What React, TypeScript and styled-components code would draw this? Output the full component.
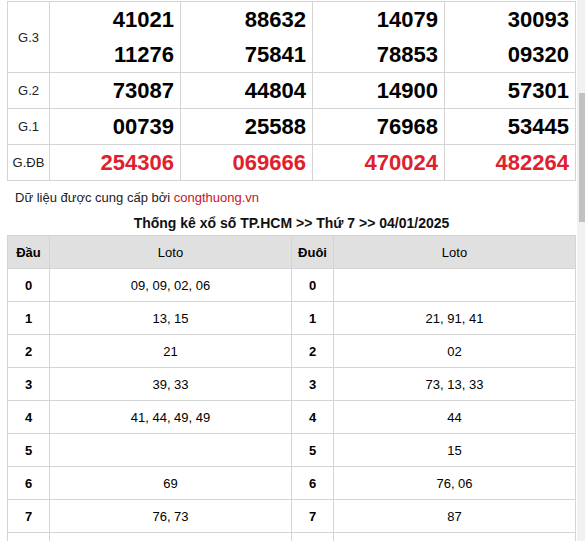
import React from "react";
import styled, { createGlobalStyle } from "styled-components";

const GlobalStyle = createGlobalStyle`
  html, body {
    margin: 0;
    padding: 0;
    background: #ffffff;
    overflow: hidden;
  }
  body {
    font-family: "Liberation Sans", Arial, sans-serif;
    color: #111;
  }
`;

const Page = styled.div`
  padding: 1px 9px 0 7px;
  width: 585px;
  box-sizing: border-box;
`;

const ResultGrid = styled.div`
  display: grid;
  grid-template-columns: 42px 131px 132px 132px 1fr;
  border-left: 1px solid #d4d4d4;
  border-top: 1px solid #d4d4d4;
`;

const Cell = styled.div`
  border-right: 1px solid #d4d4d4;
  border-bottom: 1px solid #d4d4d4;
  box-sizing: border-box;
`;

const LabelCell = styled(Cell)`
  display: flex;
  align-items: center;
  justify-content: center;
  font-size: 13px;
  color: #222;
`;

const NumberCell = styled(Cell)`
  display: flex;
  flex-direction: column;
  align-items: flex-end;
  justify-content: center;
  padding-right: 6px;
`;

const Num = styled.div<{ $special?: boolean }>`
  height: 35px;
  line-height: 35px;
  font-size: 22px;
  font-weight: 700;
  color: ${(p) => (p.$special ? "#e0202c" : "#000")};
`;

const Caption = styled.div`
  padding: 9px 8px 0;
  font-size: 13px;
  line-height: 16px;
  color: #222;
`;

const Link = styled.span`
  color: #d0112b;
`;

const Title = styled.div`
  margin-top: 8px;
  text-align: center;
  font-size: 14px;
  font-weight: 700;
  line-height: 18px;
  color: #111;
`;

const LotoGrid = styled.div`
  margin-top: 3px;
  display: grid;
  grid-template-columns: 42px 242px 42px 1fr;
  border-left: 1px solid #d4d4d4;
  border-top: 1px solid #d4d4d4;
`;

const LotoCell = styled.div<{ $head?: boolean; $bold?: boolean }>`
  height: 33px;
  box-sizing: border-box;
  border-right: 1px solid #d4d4d4;
  border-bottom: 1px solid #d4d4d4;
  display: flex;
  align-items: center;
  justify-content: center;
  font-size: 13px;
  font-weight: ${(p) => (p.$bold ? 700 : 400)};
  background: ${(p) => (p.$head ? "#e0e0e0" : "#fff")};
  color: #000;
`;

const Scrollbar = styled.div`
  position: fixed;
  top: 0;
  right: 0;
  width: 8px;
  height: 100%;
  background: #f1f1f1;
`;

const Thumb = styled.div`
  position: absolute;
  top: 93px;
  right: 0;
  width: 6px;
  height: 129px;
  background: #c1c1c1;
`;

type Prize = { label: string; nums: string[][]; special?: boolean };

const prizes: Prize[] = [
  {
    label: "G.3",
    nums: [
      ["41021", "11276"],
      ["88632", "75841"],
      ["14079", "78853"],
      ["30093", "09320"],
    ],
  },
  { label: "G.2", nums: [["73087"], ["44804"], ["14900"], ["57301"]] },
  { label: "G.1", nums: [["00739"], ["25588"], ["76968"], ["53445"]] },
  {
    label: "G.ĐB",
    nums: [["254306"], ["069666"], ["470024"], ["482264"]],
    special: true,
  },
];

const loto: [string, string, string][] = [
  ["0", "09, 09, 02, 06", ""],
  ["1", "13, 15", "21, 91, 41"],
  ["2", "21", "02"],
  ["3", "39, 33", "73, 13, 33"],
  ["4", "41, 44, 49, 49", "44"],
  ["5", "", "15"],
  ["6", "69", "76, 06"],
  ["7", "76, 73", "87"],
  ["", "", ""],
];

export default function App() {
  return (
    <>
      <GlobalStyle />
      <Page>
        <ResultGrid>
          {prizes.map((p) => (
            <React.Fragment key={p.label}>
              <LabelCell>{p.label}</LabelCell>
              {p.nums.map((col, i) => (
                <NumberCell key={i}>
                  {col.map((n) => (
                    <Num key={n} $special={p.special}>
                      {n}
                    </Num>
                  ))}
                </NumberCell>
              ))}
            </React.Fragment>
          ))}
        </ResultGrid>
        <Caption>
          Dữ liệu được cung cấp bởi <Link>congthuong.vn</Link>
        </Caption>
        <Title>Thống kê xổ số TP.HCM &gt;&gt; Thứ 7 &gt;&gt; 04/01/2025</Title>
        <LotoGrid>
          <LotoCell $head $bold>Đầu</LotoCell>
          <LotoCell $head>Loto</LotoCell>
          <LotoCell $head $bold>Đuôi</LotoCell>
          <LotoCell $head>Loto</LotoCell>
          {loto.map(([d, a, b], i) => (
            <React.Fragment key={i}>
              <LotoCell $bold>{d}</LotoCell>
              <LotoCell>{a}</LotoCell>
              <LotoCell $bold>{d}</LotoCell>
              <LotoCell>{b}</LotoCell>
            </React.Fragment>
          ))}
        </LotoGrid>
      </Page>
      <Scrollbar>
        <Thumb />
      </Scrollbar>
    </>
  );
}
